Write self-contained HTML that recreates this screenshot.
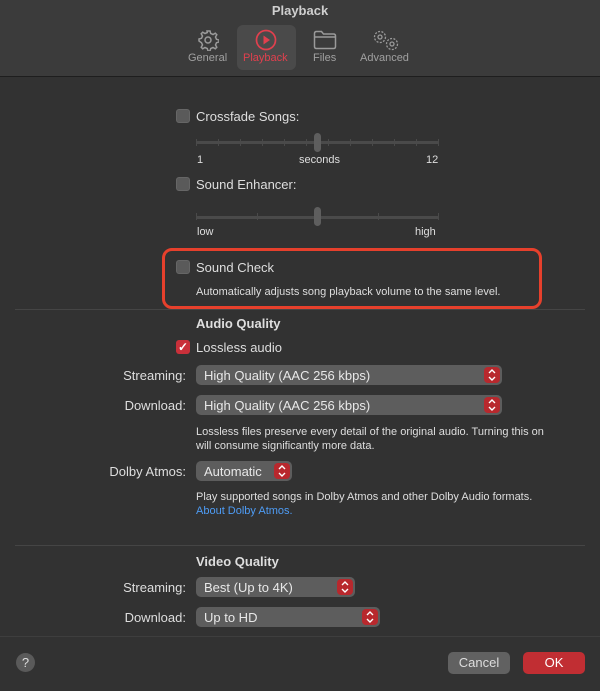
<!DOCTYPE html>
<html><head><style>
*{margin:0;padding:0;box-sizing:border-box}
body{width:600px;height:691px;background:#323232;font-family:"Liberation Sans",sans-serif;color:#dedede;position:relative;overflow:hidden;font-size:13px}
.a{position:absolute;white-space:nowrap}
.tb{position:absolute;left:0;top:0;width:600px;height:77px;background:#3b3b3b;border-bottom:1px solid #1e1e1e}
.cb{position:absolute;width:14px;height:14px;border-radius:3px;background:#5a5a5a;border:1px solid #666}
.track{position:absolute;height:3px;background:#4a4a4a;border-radius:2px}
.tick{position:absolute;width:1px;height:7px;background:#4a4a4a}
.knob{position:absolute;width:7px;height:19px;border-radius:4px;background:#5e5e5e}
.lbl{position:absolute;text-align:right;width:186px;left:0}
.pop{position:absolute;height:20px;background:#5d5d5d;border-radius:5px;padding:3px 0 0 8px;color:#e8e8e8}
.pop svg{position:absolute;right:2px;top:2px}
.sep{position:absolute;left:15px;width:570px;height:1px;background:#454545}
.sm{font-size:11px}
</style></head><body>
<div class="tb"></div>
<div class="a" style="left:0;width:600px;text-align:center;top:3px;font-weight:bold;color:#cfcfcf">Playback</div>
<div class="a" style="left:237px;top:25px;width:59px;height:45px;background:#4a4a4a;border-radius:6px"></div>
<svg class="a" style="left:197px;top:29px" width="22" height="22" viewBox="0 0 22 22" fill="none" stroke="#9a9a9a" stroke-width="1.5"><circle cx="11" cy="11" r="3"/><path d="M11 2l2 0 .7 2.5 2.3 1 2.3-1.3 1.5 1.5-1.3 2.3 1 2.3 2.5.7v2l-2.5.7-1 2.3 1.3 2.3-1.5 1.5-2.3-1.3-2.3 1-.7 2.5h-2l-.7-2.5-2.3-1-2.3 1.3-1.5-1.5 1.3-2.3-1-2.3L2 12v-2l2.5-.7 1-2.3-1.3-2.3 1.5-1.5 2.3 1.3 2.3-1L10 2z"/></svg>
<div class="a sm" style="left:188px;top:52px;color:#a0a0a0">General</div>
<svg class="a" style="left:255px;top:29px" width="22" height="22" viewBox="0 0 22 22"><circle cx="11" cy="11" r="9.5" fill="none" stroke="#e0404e" stroke-width="1.7"/><path d="M8.5 6.5l6.5 4.5-6.5 4.5z" fill="#e0404e"/></svg>
<div class="a sm" style="left:243px;top:52px;color:#e0404e">Playback</div>
<svg class="a" style="left:313px;top:30px" width="24" height="20" viewBox="0 0 24 20" fill="none" stroke="#9a9a9a" stroke-width="1.5"><path d="M1.5 3.5q0-2 2-2h5l2 2.5h10q2 0 2 2v10.5q0 2-2 2h-17q-2 0-2-2z M1.5 7h21"/></svg>
<div class="a sm" style="left:313px;top:52px;color:#a0a0a0">Files</div>
<svg class="a" style="left:371px;top:28px" width="30" height="24" viewBox="0 0 30 24" fill="none" stroke="#9a9a9a" stroke-width="1.3"><circle cx="9" cy="9" r="5.5" stroke-dasharray="2 1.4"/><circle cx="9" cy="9" r="2"/><circle cx="21" cy="16" r="5.5" stroke-dasharray="2 1.4"/><circle cx="21" cy="16" r="2"/></svg>
<div class="a sm" style="left:360px;top:52px;color:#a0a0a0">Advanced</div>

<div class="cb" style="left:176px;top:109px"></div>
<div class="a" style="left:196px;top:109px">Crossfade Songs:</div>
<div class="track" style="left:196px;top:141px;width:243px"></div>
<div class="tick" style="left:196px;top:139px"></div><div class="tick" style="left:218px;top:139px"></div><div class="tick" style="left:240px;top:139px"></div><div class="tick" style="left:262px;top:139px"></div><div class="tick" style="left:284px;top:139px"></div><div class="tick" style="left:306px;top:139px"></div><div class="tick" style="left:328px;top:139px"></div><div class="tick" style="left:350px;top:139px"></div><div class="tick" style="left:372px;top:139px"></div><div class="tick" style="left:394px;top:139px"></div><div class="tick" style="left:416px;top:139px"></div><div class="tick" style="left:438px;top:139px"></div>
<div class="knob" style="left:314px;top:133px"></div>
<div class="a sm" style="left:197px;top:154px">1</div>
<div class="a sm" style="left:299px;top:154px">seconds</div>
<div class="a sm" style="left:426px;top:154px">12</div>

<div class="cb" style="left:176px;top:177px"></div>
<div class="a" style="left:196px;top:177px">Sound Enhancer:</div>
<div class="track" style="left:196px;top:216px;width:243px"></div>
<div class="tick" style="left:196px;top:213px"></div><div class="tick" style="left:257px;top:213px"></div><div class="tick" style="left:378px;top:213px"></div><div class="tick" style="left:438px;top:213px"></div>
<div class="knob" style="left:314px;top:207px"></div>
<div class="a sm" style="left:197px;top:226px">low</div>
<div class="a sm" style="left:415px;top:226px">high</div>

<div class="a" style="left:162px;top:248px;width:380px;height:61px;border:3px solid #e6402c;border-radius:10px"></div>
<div class="cb" style="left:176px;top:260px"></div>
<div class="a" style="left:196px;top:260px">Sound Check</div>
<div class="a sm" style="left:196px;top:286px">Automatically adjusts song playback volume to the same level.</div>
<div class="sep" style="top:309px"></div>

<div class="a" style="left:196px;top:316px;font-weight:bold">Audio Quality</div>
<div class="a" style="left:176px;top:340px;width:14px;height:14px;border-radius:3px;background:#c9303a;color:#fff;font-size:12px;line-height:14px;text-align:center;font-weight:bold">✓</div>
<div class="a" style="left:196px;top:340px">Lossless audio</div>
<div class="lbl" style="top:368px">Streaming:</div>
<div class="pop" style="left:196px;top:365px;width:306px">High Quality (AAC 256 kbps)<svg width="16" height="16" viewBox="0 0 16 16"><rect width="16" height="16" rx="4" fill="#b8282d"/><path d="M5 6l3-3 3 3M5 10l3 3 3-3" fill="none" stroke="#fff" stroke-width="1.4"/></svg></div>
<div class="lbl" style="top:398px">Download:</div>
<div class="pop" style="left:196px;top:395px;width:306px">High Quality (AAC 256 kbps)<svg width="16" height="16" viewBox="0 0 16 16"><rect width="16" height="16" rx="4" fill="#b8282d"/><path d="M5 6l3-3 3 3M5 10l3 3 3-3" fill="none" stroke="#fff" stroke-width="1.4"/></svg></div>
<div class="a sm" style="left:196px;top:425px;line-height:14px">Lossless files preserve every detail of the original audio. Turning this on<br>will consume significantly more data.</div>
<div class="lbl" style="top:464px">Dolby Atmos:</div>
<div class="pop" style="left:196px;top:461px;width:96px">Automatic<svg width="16" height="16" viewBox="0 0 16 16"><rect width="16" height="16" rx="4" fill="#b8282d"/><path d="M5 6l3-3 3 3M5 10l3 3 3-3" fill="none" stroke="#fff" stroke-width="1.4"/></svg></div>
<div class="a sm" style="left:196px;top:490px;line-height:14px">Play supported songs in Dolby Atmos and other Dolby Audio formats.<br><span style="color:#4e9cf5">About Dolby Atmos.</span></div>
<div class="sep" style="top:545px"></div>

<div class="a" style="left:196px;top:554px;font-weight:bold">Video Quality</div>
<div class="lbl" style="top:580px">Streaming:</div>
<div class="pop" style="left:196px;top:577px;width:159px">Best (Up to 4K)<svg width="16" height="16" viewBox="0 0 16 16"><rect width="16" height="16" rx="4" fill="#b8282d"/><path d="M5 6l3-3 3 3M5 10l3 3 3-3" fill="none" stroke="#fff" stroke-width="1.4"/></svg></div>
<div class="lbl" style="top:610px">Download:</div>
<div class="pop" style="left:196px;top:607px;width:184px">Up to HD<svg width="16" height="16" viewBox="0 0 16 16"><rect width="16" height="16" rx="4" fill="#b8282d"/><path d="M5 6l3-3 3 3M5 10l3 3 3-3" fill="none" stroke="#fff" stroke-width="1.4"/></svg></div>
<div class="sep" style="top:636px;left:0;width:600px;background:#3e3e3e"></div>

<div class="a" style="left:16px;top:653px;width:19px;height:19px;border-radius:50%;background:#5a5a5a;text-align:center;line-height:19px;font-size:13px">?</div>
<div class="a" style="left:448px;top:652px;width:62px;height:22px;border-radius:5px;background:#616161;text-align:center;line-height:22px">Cancel</div>
<div class="a" style="left:523px;top:652px;width:62px;height:22px;border-radius:5px;background:#c12e33;text-align:center;line-height:22px;color:#fff">OK</div>
</body></html>
